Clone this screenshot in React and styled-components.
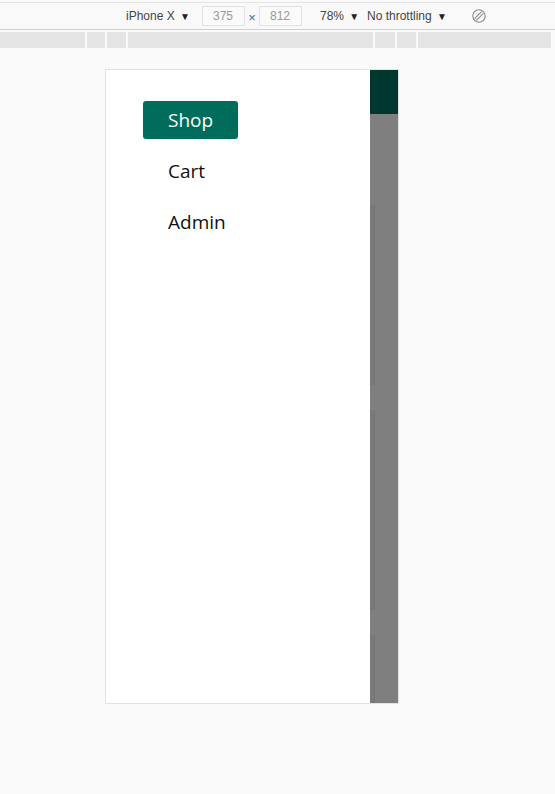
import styled, { createGlobalStyle } from "styled-components";

const GlobalStyle = createGlobalStyle`
    body {
        margin: 0;
        background: #fafafa;
        font-family: "Open Sans", "Noto Sans", sans-serif;
    }
`;

const segments = [87, 20, 21, 247, 22, 21, 135, 2];
const cards = [180, 200, 90];
const links = ["Shop", "Cart", "Admin"];

export default function App() {
    return (
        <Page>
            <GlobalStyle />
            <Toolbar>
                <DeviceName>iPhone X <Caret>▼</Caret></DeviceName>
                <SizeBox>375</SizeBox>
                <Times>×</Times>
                <SizeBox>812</SizeBox>
                <Zoom>78% <Caret>▼</Caret></Zoom>
                <Throttle>No throttling <Caret>▼</Caret></Throttle>
                <RotateIcon width="16" height="16" viewBox="0 0 16 16">
                    <circle cx="8" cy="8" r="6.2" fill="none" stroke="#888" strokeWidth="1.1" />
                    <path d="M3.6 10.6 L10.6 3.6 M5.4 12.4 L12.4 5.4" stroke="#888" strokeWidth="1.1" fill="none" />
                </RotateIcon>
            </Toolbar>
            <MediaBar>
                {segments.map((w, i) => (
                    <Segment key={i} style={{ width: w }} />
                ))}
            </MediaBar>
            <Stage>
                <Device>
                    <Drawer>
                        <NavList>
                            {links.map((label) => (
                                <NavLink key={label} $active={label === "Shop"}>{label}</NavLink>
                            ))}
                        </NavList>
                    </Drawer>
                    <Backdrop>
                        <HeaderEdge />
                        <Shade>
                            {cards.map((h, i) => (
                                <CardEdge key={i} style={{ height: h }} />
                            ))}
                        </Shade>
                    </Backdrop>
                </Device>
            </Stage>
        </Page>
    );
}

const Page = styled.div`
    display: flex;
    flex-direction: column;
    min-height: 794px;
`;

const Toolbar = styled.div`
    display: flex;
    align-items: center;
    height: 26px;
    margin-top: 2px;
    border-top: 1px solid #e4e4e4;
    border-bottom: 1px solid #cfcfcf;
    background: #f9f9f9;
    padding-left: 126px;
    font-family: "Liberation Sans", "DejaVu Sans", sans-serif;
    font-size: 12px;
    color: #444;
`;

const Caret = styled.span`
    font-size: 10px;
    margin-left: 2px;
    color: #222;
`;

const DeviceName = styled.span`
    width: 76px;
`;

const SizeBox = styled.span`
    box-sizing: border-box;
    width: 43px;
    height: 20px;
    line-height: 18px;
    padding-left: 10px;
    border: 1px solid #e2e2e2;
    background: #fafafa;
    color: #999;
`;

const Times = styled.span`
    width: 14px;
    text-align: center;
    color: #2a74b6;
    font-size: 13px;
    padding-top: 3px;
`;

const Zoom = styled.span`
    margin-left: 18px;
    width: 47px;
`;

const Throttle = styled.span`
    width: 104px;
`;

const RotateIcon = styled.svg`
    display: block;
`;

const MediaBar = styled.div`
    display: flex;
    height: 16px;
    margin-top: 2px;
    background: #e5e5e5;
`;

const Segment = styled.div`
    box-sizing: border-box;
    height: 100%;
    border-right: 2px solid #fafafa;
    flex-shrink: 0;
`;

const Stage = styled.div`
    padding: 21px 0 0 105px;
`;

const Device = styled.div`
    display: flex;
    width: 292px;
    height: 633px;
    border: 1px solid #e2e2e2;
    background: #fff;
`;

const Drawer = styled.nav`
    width: 264px;
    background: #fff;
    padding: 31px 0 0 37px;
    box-sizing: border-box;
`;

const NavList = styled.div`
    display: flex;
    flex-direction: column;
    gap: 13px;
`;

const NavLink = styled.a`
    box-sizing: border-box;
    width: 95px;
    height: 38px;
    line-height: 38px;
    padding-left: 25px;
    border-radius: 3px;
    font-size: 19px;
    color: ${(p) => (p.$active ? "#fff" : "#111")};
    background: ${(p) => (p.$active ? "#006d5c" : "transparent")};
    cursor: pointer;
`;

const Backdrop = styled.div`
    flex: 1;
    display: flex;
    flex-direction: column;
`;

const HeaderEdge = styled.div`
    height: 44px;
    background: #00372f;
`;

const Shade = styled.div`
    flex: 1;
    display: flex;
    flex-direction: column;
    gap: 25px;
    padding-top: 91px;
    background: #7f7f7f;
    overflow: hidden;
`;

const CardEdge = styled.div`
    width: 4px;
    flex-shrink: 0;
    background: #797979;
    border-right: 1px solid #747474;
`;
